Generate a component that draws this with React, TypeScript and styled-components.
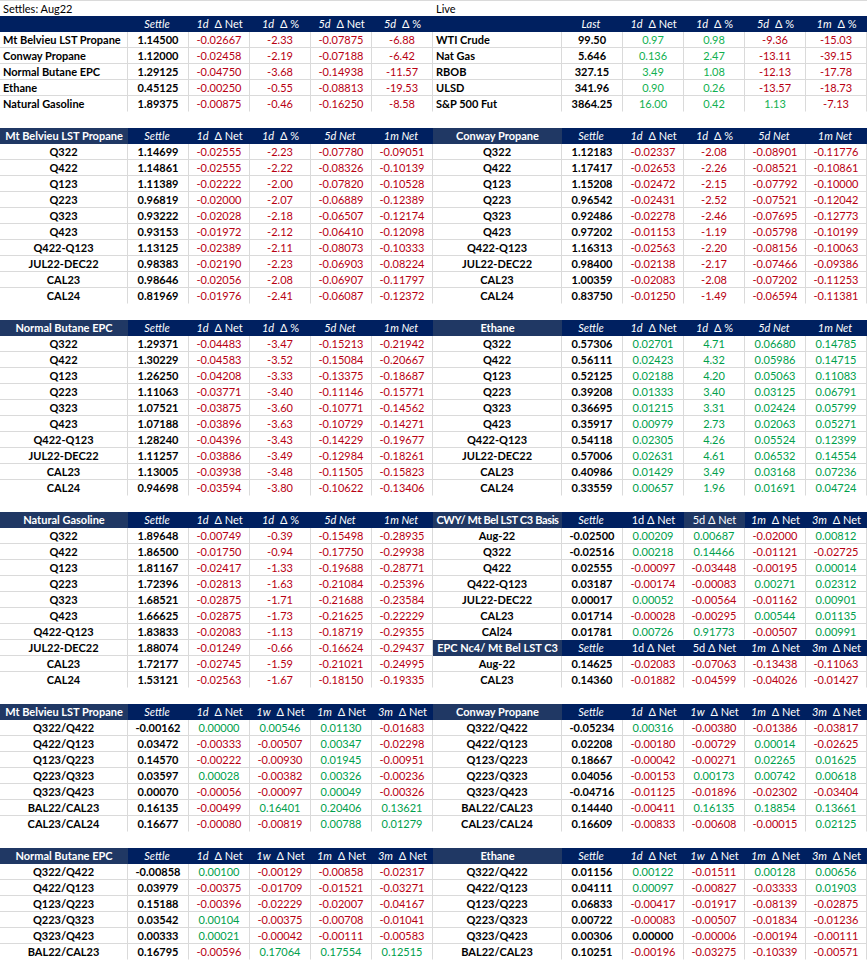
import React from 'react';
import styled, { createGlobalStyle } from 'styled-components';

const GRID = '#dadada';
const NAVY = '#002060';
const NAVY_LIGHT = '#203864';
const RED = '#b80012';
const GREEN_TOP = '#10b050';
const GREEN = '#00a04c';

const GlobalStyle = createGlobalStyle`
  html, body { margin: 0; padding: 0; background: #ffffff; }
  body {
    font-family: Lato, "Liberation Sans", sans-serif;
    font-size: 11px;
    color: #000;
  }
  * { box-sizing: border-box; }
`;

const Sheet = styled.div`
  width: 867px;
  height: 961px;
  overflow: hidden;
  display: flex;
  flex-direction: column;
`;

const TitleBand = styled.div`
  display: grid;
  grid-template-columns: 433px 434px;
  height: 16px;
  border-top: 1px solid ${GRID};
`;

const TitleText = styled.div`
  padding-left: 3px;
  line-height: 15px;
  font-size: 11px;
`;

const Band = styled.div`
  display: grid;
  grid-template-columns: 433px 434px;
  align-items: start;
`;

const Spacer = styled.div`
  height: 16px;
  flex: none;
`;

const Stack = styled.div`
  display: flex;
  flex-direction: column;
`;

const Grid = styled.div<{ $labelW: number }>`
  display: grid;
  grid-template-columns: ${(p) => p.$labelW}px repeat(5, 61px);
  grid-auto-rows: 16px;
`;

const Head = styled.div<{ $light?: boolean; $bold?: boolean; $tight?: boolean }>`
  background: ${(p) => (p.$light ? NAVY_LIGHT : NAVY)};
  color: #fff;
  line-height: 16px;
  font-size: 11px;
  font-weight: ${(p) => (p.$bold ? 700 : 400)};
  text-align: center;
  letter-spacing: ${(p) => (p.$tight ? '-0.35px' : 'normal')};
  white-space: nowrap;
  overflow: hidden;
`;

const Ital = styled.span`
  font-style: italic;
  margin-right: 3px;
`;

const Cell = styled.div<{ $color: string; $bold?: boolean; $left?: boolean; $last?: boolean }>`
  color: ${(p) => p.$color};
  font-weight: ${(p) => (p.$bold ? 700 : 400)};
  text-align: ${(p) => (p.$left ? 'left' : 'center')};
  padding-left: ${(p) => (p.$left ? '3px' : '0')};
  line-height: 15px;
  white-space: nowrap;
  overflow: hidden;
  border-right: 1px solid ${GRID};
  border-bottom: 1px solid ${(p) => (p.$last ? 'transparent' : GRID)};
`;

type TableSpec = {
  label: string;
  heads: string[];
  rows: string[][];
  labelW?: number;
  labelLeft?: boolean;
  lightLabel?: boolean;
  lightCols?: number[];
  green?: string;
  tightHead?: boolean;
};

function renderHead(text: string) {
  const parts = text.split('*');
  return parts.map((p, i) =>
    i % 2 === 1 ? <Ital key={i}>{p}</Ital> : <React.Fragment key={i}>{p}</React.Fragment>
  );
}

function valueStyle(v: string, green: string): { text: string; color: string; bold: boolean } {
  if (v.startsWith('~')) return { text: v.slice(1), color: '#000', bold: true };
  if (v.startsWith('-')) return { text: v, color: RED, bold: false };
  return { text: v, color: green, bold: false };
}

const Table: React.FC<{ spec: TableSpec }> = ({ spec }) => {
  const green = spec.green ?? GREEN;
  return (
    <Grid $labelW={spec.labelW ?? 128}>
      <Head $light={spec.lightLabel} $bold $tight={spec.tightHead}>
        {spec.label}
      </Head>
      {spec.heads.map((h, i) => (
        <Head key={i} $light={spec.lightCols?.includes(i + 1)}>
          {renderHead(h)}
        </Head>
      ))}
      {spec.rows.map((row, ri) => {
        const last = ri === spec.rows.length - 1;
        return row.map((v, ci) => {
          if (ci === 0)
            return (
              <Cell key={ri + '-' + ci} $color="#000" $bold $left={spec.labelLeft} $last={last}>
                {v}
              </Cell>
            );
          if (ci === 1)
            return (
              <Cell key={ri + '-' + ci} $color="#000" $bold $last={last}>
                {v}
              </Cell>
            );
          const s = valueStyle(v, green);
          return (
            <Cell key={ri + '-' + ci} $color={s.color} $bold={s.bold} $last={last}>
              {s.text}
            </Cell>
          );
        });
      })}
    </Grid>
  );
};

const H_SETTLE_A = ['*Settle*', '*1d* Δ Net', '*1d* Δ %', '*5d Net*', '*1m Net*'];
const H_SPREAD = ['*Settle*', '*1d* Δ Net', '*1w* Δ Net', '*1m* Δ Net', '*3m* Δ Net'];
const H_BASIS = ['*Settle*', '1d Δ Net', '5d Δ Net', '*1m* Δ Net', '*3m* Δ Net'];

const settles: TableSpec = {
  label: '',
  heads: ['*Settle*', '*1d* Δ Net', '*1d* Δ %', '*5d* Δ Net', '*5d* Δ %'],
  labelLeft: true,
  green: GREEN_TOP,
  rows: [
    ['Mt Belvieu LST Propane', '1.14500', '-0.02667', '-2.33', '-0.07875', '-6.88'],
    ['Conway Propane', '1.12000', '-0.02458', '-2.19', '-0.07188', '-6.42'],
    ['Normal Butane EPC', '1.29125', '-0.04750', '-3.68', '-0.14938', '-11.57'],
    ['Ethane', '0.45125', '-0.00250', '-0.55', '-0.08813', '-19.53'],
    ['Natural Gasoline', '1.89375', '-0.00875', '-0.46', '-0.16250', '-8.58'],
  ],
};

const live: TableSpec = {
  label: '',
  heads: ['*Last*', '*1d* Δ Net', '*1d* Δ %', '*5d* Δ %', '*1m* Δ %'],
  labelLeft: true,
  labelW: 129,
  green: GREEN_TOP,
  rows: [
    ['WTI Crude', '99.50', '0.97', '0.98', '-9.36', '-15.03'],
    ['Nat Gas', '5.646', '0.136', '2.47', '-13.11', '-39.15'],
    ['RBOB', '327.15', '3.49', '1.08', '-12.13', '-17.78'],
    ['ULSD', '341.96', '0.90', '0.26', '-13.57', '-18.73'],
    ['S&P 500 Fut', '3864.25', '16.00', '0.42', '1.13', '-7.13'],
  ],
};

const mbProp: TableSpec = {
  label: 'Mt Belvieu LST Propane',
  heads: H_SETTLE_A,
  lightLabel: true,
  rows: [
    ['Q322', '1.14699', '-0.02555', '-2.23', '-0.07780', '-0.09051'],
    ['Q422', '1.14861', '-0.02555', '-2.22', '-0.08326', '-0.10139'],
    ['Q123', '1.11389', '-0.02222', '-2.00', '-0.07820', '-0.10528'],
    ['Q223', '0.96819', '-0.02000', '-2.07', '-0.06889', '-0.12389'],
    ['Q323', '0.93222', '-0.02028', '-2.18', '-0.06507', '-0.12174'],
    ['Q423', '0.93153', '-0.01972', '-2.12', '-0.06410', '-0.12098'],
    ['Q422-Q123', '1.13125', '-0.02389', '-2.11', '-0.08073', '-0.10333'],
    ['JUL22-DEC22', '0.98383', '-0.02190', '-2.23', '-0.06903', '-0.08224'],
    ['CAL23', '0.98646', '-0.02056', '-2.08', '-0.06907', '-0.11797'],
    ['CAL24', '0.81969', '-0.01976', '-2.41', '-0.06087', '-0.12372'],
  ],
};

const conway: TableSpec = {
  label: 'Conway Propane',
  heads: H_SETTLE_A,
  labelW: 129,
  lightLabel: true,
  rows: [
    ['Q322', '1.12183', '-0.02337', '-2.08', '-0.08901', '-0.11776'],
    ['Q422', '1.17417', '-0.02653', '-2.26', '-0.08521', '-0.10861'],
    ['Q123', '1.15208', '-0.02472', '-2.15', '-0.07792', '-0.10000'],
    ['Q223', '0.96542', '-0.02431', '-2.52', '-0.07521', '-0.12042'],
    ['Q323', '0.92486', '-0.02278', '-2.46', '-0.07695', '-0.12773'],
    ['Q423', '0.97202', '-0.01153', '-1.19', '-0.05798', '-0.10199'],
    ['Q422-Q123', '1.16313', '-0.02563', '-2.20', '-0.08156', '-0.10063'],
    ['JUL22-DEC22', '0.98400', '-0.02138', '-2.17', '-0.07466', '-0.09386'],
    ['CAL23', '1.00359', '-0.02083', '-2.08', '-0.07202', '-0.11253'],
    ['CAL24', '0.83750', '-0.01250', '-1.49', '-0.06594', '-0.11381'],
  ],
};

const butane: TableSpec = {
  label: 'Normal Butane EPC',
  heads: H_SETTLE_A,
  lightLabel: true,
  rows: [
    ['Q322', '1.29371', '-0.04483', '-3.47', '-0.15213', '-0.21942'],
    ['Q422', '1.30229', '-0.04583', '-3.52', '-0.15084', '-0.20667'],
    ['Q123', '1.26250', '-0.04208', '-3.33', '-0.13375', '-0.18687'],
    ['Q223', '1.11063', '-0.03771', '-3.40', '-0.11146', '-0.15771'],
    ['Q323', '1.07521', '-0.03875', '-3.60', '-0.10771', '-0.14562'],
    ['Q423', '1.07188', '-0.03896', '-3.63', '-0.10729', '-0.14271'],
    ['Q422-Q123', '1.28240', '-0.04396', '-3.43', '-0.14229', '-0.19677'],
    ['JUL22-DEC22', '1.11257', '-0.03886', '-3.49', '-0.12984', '-0.18261'],
    ['CAL23', '1.13005', '-0.03938', '-3.48', '-0.11505', '-0.15823'],
    ['CAL24', '0.94698', '-0.03594', '-3.80', '-0.10622', '-0.13406'],
  ],
};

const ethane: TableSpec = {
  label: 'Ethane',
  heads: H_SETTLE_A,
  labelW: 129,
  lightLabel: true,
  rows: [
    ['Q322', '0.57306', '0.02701', '4.71', '0.06680', '0.14785'],
    ['Q422', '0.56111', '0.02423', '4.32', '0.05986', '0.14715'],
    ['Q123', '0.52125', '0.02188', '4.20', '0.05063', '0.11083'],
    ['Q223', '0.39208', '0.01333', '3.40', '0.03125', '0.06791'],
    ['Q323', '0.36695', '0.01215', '3.31', '0.02424', '0.05799'],
    ['Q423', '0.35917', '0.00979', '2.73', '0.02063', '0.05271'],
    ['Q422-Q123', '0.54118', '0.02305', '4.26', '0.05524', '0.12399'],
    ['JUL22-DEC22', '0.57006', '0.02631', '4.61', '0.06532', '0.14554'],
    ['CAL23', '0.40986', '0.01429', '3.49', '0.03168', '0.07236'],
    ['CAL24', '0.33559', '0.00657', '1.96', '0.01691', '0.04724'],
  ],
};

const natgas: TableSpec = {
  label: 'Natural Gasoline',
  heads: H_SETTLE_A,
  lightLabel: true,
  rows: [
    ['Q322', '1.89648', '-0.00749', '-0.39', '-0.15498', '-0.28935'],
    ['Q422', '1.86500', '-0.01750', '-0.94', '-0.17750', '-0.29938'],
    ['Q123', '1.81167', '-0.02417', '-1.33', '-0.19688', '-0.28771'],
    ['Q223', '1.72396', '-0.02813', '-1.63', '-0.21084', '-0.25396'],
    ['Q323', '1.68521', '-0.02875', '-1.71', '-0.21688', '-0.23584'],
    ['Q423', '1.66625', '-0.02875', '-1.73', '-0.21625', '-0.22229'],
    ['Q422-Q123', '1.83833', '-0.02083', '-1.13', '-0.18719', '-0.29355'],
    ['JUL22-DEC22', '1.88074', '-0.01249', '-0.66', '-0.16624', '-0.29437'],
    ['CAL23', '1.72177', '-0.02745', '-1.59', '-0.21021', '-0.24995'],
    ['CAL24', '1.53121', '-0.02563', '-1.67', '-0.18150', '-0.19335'],
  ],
};

const cwyBasis: TableSpec = {
  label: 'CWY/ Mt Bel LST C3 Basis',
  heads: H_BASIS,
  labelW: 129,
  lightLabel: true,
  tightHead: true,
  lightCols: [3],
  rows: [
    ['Aug-22', '-0.02500', '0.00209', '0.00687', '-0.02000', '0.00812'],
    ['Q322', '-0.02516', '0.00218', '0.14466', '-0.01121', '-0.02725'],
    ['Q422', '0.02555', '-0.00097', '-0.03448', '-0.00195', '0.00014'],
    ['Q422-Q123', '0.03187', '-0.00174', '-0.00083', '0.00271', '0.02312'],
    ['JUL22-DEC22', '0.00017', '0.00052', '-0.00564', '-0.01162', '0.00901'],
    ['CAL23', '0.01714', '-0.00028', '-0.00295', '0.00544', '0.01135'],
    ['CAl24', '0.01781', '0.00726', '0.91773', '-0.00507', '0.00991'],
  ],
};

const epcBasis: TableSpec = {
  label: 'EPC Nc4/ Mt Bel LST C3',
  heads: H_BASIS,
  labelW: 129,
  lightLabel: true,
  rows: [
    ['Aug-22', '0.14625', '-0.02083', '-0.07063', '-0.13438', '-0.11063'],
    ['CAL23', '0.14360', '-0.01882', '-0.04599', '-0.04026', '-0.01427'],
  ],
};

const mbSpread: TableSpec = {
  label: 'Mt Belvieu LST Propane',
  heads: H_SPREAD,
  lightLabel: true,
  rows: [
    ['Q322/Q422', '-0.00162', '0.00000', '0.00546', '0.01130', '-0.01683'],
    ['Q422/Q123', '0.03472', '-0.00333', '-0.00507', '0.00347', '-0.02298'],
    ['Q123/Q223', '0.14570', '-0.00222', '-0.00930', '0.01945', '-0.00951'],
    ['Q223/Q323', '0.03597', '0.00028', '-0.00382', '0.00326', '-0.00236'],
    ['Q323/Q423', '0.00070', '-0.00056', '-0.00097', '0.00049', '-0.00326'],
    ['BAL22/CAL23', '0.16135', '-0.00499', '0.16401', '0.20406', '0.13621'],
    ['CAL23/CAL24', '0.16677', '-0.00080', '-0.00819', '0.00788', '0.01279'],
  ],
};

const cwSpread: TableSpec = {
  label: 'Conway Propane',
  heads: H_SPREAD,
  labelW: 129,
  lightLabel: true,
  rows: [
    ['Q322/Q422', '-0.05234', '0.00316', '-0.00380', '-0.01386', '-0.03817'],
    ['Q422/Q123', '0.02208', '-0.00180', '-0.00729', '0.00014', '-0.02625'],
    ['Q123/Q223', '0.18667', '-0.00042', '-0.00271', '0.02265', '0.01625'],
    ['Q223/Q323', '0.04056', '-0.00153', '0.00173', '0.00742', '0.00618'],
    ['Q323/Q423', '-0.04716', '-0.01125', '-0.01896', '-0.02302', '-0.03404'],
    ['BAL22/CAL23', '0.14440', '-0.00411', '0.16135', '0.18854', '0.13661'],
    ['CAL23/CAL24', '0.16609', '-0.00833', '-0.00608', '-0.00015', '0.02125'],
  ],
};

const buSpread: TableSpec = {
  label: 'Normal Butane EPC',
  heads: H_SPREAD,
  lightLabel: true,
  rows: [
    ['Q322/Q422', '-0.00858', '0.00100', '-0.00129', '-0.00858', '-0.02317'],
    ['Q422/Q123', '0.03979', '-0.00375', '-0.01709', '-0.01521', '-0.03271'],
    ['Q123/Q223', '0.15188', '-0.00396', '-0.02229', '-0.02007', '-0.04167'],
    ['Q223/Q323', '0.03542', '0.00104', '-0.00375', '-0.00708', '-0.01041'],
    ['Q323/Q423', '0.00333', '0.00021', '-0.00042', '-0.00111', '-0.00583'],
    ['BAL22/CAL23', '0.16795', '-0.00596', '0.17064', '0.17554', '0.12515'],
  ],
};

const etSpread: TableSpec = {
  label: 'Ethane',
  heads: H_SPREAD,
  labelW: 129,
  lightLabel: true,
  rows: [
    ['Q322/Q422', '0.01156', '0.00122', '-0.01511', '0.00128', '0.00656'],
    ['Q422/Q123', '0.04111', '0.00097', '-0.00827', '-0.03333', '0.01903'],
    ['Q123/Q223', '0.06833', '-0.00417', '-0.01917', '-0.08139', '-0.02875'],
    ['Q223/Q323', '0.00722', '-0.00083', '-0.00507', '-0.01834', '-0.01236'],
    ['Q323/Q423', '0.00306', '~0.00000', '-0.00006', '-0.00194', '-0.00111'],
    ['BAL22/CAL23', '0.10251', '-0.00196', '-0.03275', '-0.10339', '-0.00571'],
  ],
};

export default function App() {
  return (
    <>
      <GlobalStyle />
      <Sheet>
        <TitleBand>
          <TitleText>Settles: Aug22</TitleText>
          <TitleText>Live</TitleText>
        </TitleBand>
        <Band>
          <Table spec={settles} />
          <Table spec={live} />
        </Band>
        <Spacer />
        <Band>
          <Table spec={mbProp} />
          <Table spec={conway} />
        </Band>
        <Spacer />
        <Band>
          <Table spec={butane} />
          <Table spec={ethane} />
        </Band>
        <Spacer />
        <Band>
          <Table spec={natgas} />
          <Stack>
            <Table spec={cwyBasis} />
            <Table spec={epcBasis} />
          </Stack>
        </Band>
        <Spacer />
        <Band>
          <Table spec={mbSpread} />
          <Table spec={cwSpread} />
        </Band>
        <Spacer />
        <Band>
          <Table spec={buSpread} />
          <Table spec={etSpread} />
        </Band>
      </Sheet>
    </>
  );
}
